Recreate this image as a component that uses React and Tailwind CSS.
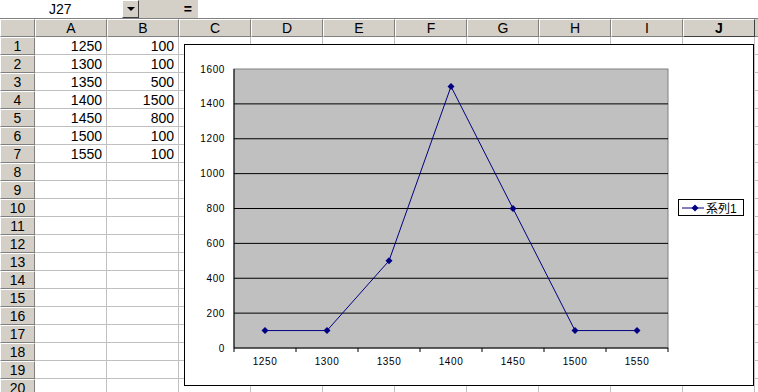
import React from "react";

const cols = ["A", "B", "C", "D", "E", "F", "G", "H", "I", "J"];
const data = [
  [1250, 100],
  [1300, 100],
  [1350, 500],
  [1400, 1500],
  [1450, 800],
  [1500, 100],
  [1550, 100],
];
const rows = Array.from({ length: 20 }, (_, i) => i + 1);

// plot area in chart-local coords
const PL = 49;
const PR = 483;
const PT = 24;
const PB = 303;
const catW = (PR - PL) / 7;
const yOf = (v) => PB - (v / 1600) * (PB - PT);
const xOf = (i) => PL + catW * i + catW / 2;

function Diamond({ x, y }) {
  return (
    <polygon
      points={`${x},${y - 3.5} ${x + 3.5},${y} ${x},${y + 3.5} ${x - 3.5},${y}`}
      fill="#000080"
    />
  );
}

function Chart() {
  const ticks = [0, 200, 400, 600, 800, 1000, 1200, 1400, 1600];
  const pts = data.map(([, v], i) => `${xOf(i)},${yOf(v)}`).join(" ");
  return (
    <div className="absolute left-[184px] top-[44px] w-[570px] h-[342px] bg-white border border-black">
      <svg width="568" height="340" className="block">
        <rect x={PL} y={PT} width={PR - PL} height={PB - PT} fill="#c0c0c0" stroke="#808080" />
        {ticks.slice(1, -1).map((t) => (
          <line key={t} x1={PL} x2={PR} y1={yOf(t)} y2={yOf(t)} stroke="#000" />
        ))}
        <line x1={PL} x2={PL} y1={PT} y2={PB} stroke="#000" />
        <line x1={PL} x2={PR} y1={PB} y2={PB} stroke="#000" />
        {Array.from({ length: 8 }, (_, k) => (
          <line key={k} x1={PL + catW * k} x2={PL + catW * k} y1={PB} y2={PB + 4} stroke="#000" />
        ))}
        {ticks.map((t) => (
          <text
            key={t}
            x={40}
            y={yOf(t) + 3.5}
            textAnchor="end"
            fontSize="10"
            letterSpacing="0.6"
            fontFamily="'Liberation Sans', Arial, sans-serif"
            fill="#000"
          >
            {t}
          </text>
        ))}
        {data.map(([c], i) => (
          <text
            key={c}
            x={xOf(i)}
            y={320}
            textAnchor="middle"
            fontSize="10"
            letterSpacing="0.6"
            fontFamily="'Liberation Sans', Arial, sans-serif"
            fill="#000"
          >
            {c}
          </text>
        ))}
        <polyline points={pts} fill="none" stroke="#000080" strokeWidth="1" />
        {data.map(([c, v], i) => (
          <Diamond key={c} x={xOf(i)} y={yOf(v)} />
        ))}
        {/* legend */}
        <rect x={493.5} y={154.5} width={65} height={16} fill="#fff" stroke="#000" />
        <line x1={497} x2={519} y1={163} y2={163} stroke="#000080" />
        <Diamond x={510} y={163} />
        <text
          x={521}
          y={167.5}
          fontSize="12"
          fontFamily="'Liberation Sans', 'Noto Sans CJK JP', sans-serif"
          fill="#000"
        >
          系列1
        </text>
      </svg>
    </div>
  );
}

export default function App() {
  return (
    <div
      className="relative w-[758px] h-[392px] overflow-hidden bg-white text-[14px] text-black"
      style={{ fontFamily: "'Liberation Sans', Arial, 'Noto Sans CJK JP', sans-serif" }}
    >
      {/* formula bar */}
      <div className="flex h-[19px] border-b border-[#808080]">
        <div className="w-[122px] h-[18px] bg-white flex items-center pl-[49px] leading-none">J27</div>
        <div className="w-[17px] h-[18px] bg-[#d4d0c8] border-t border-l border-white border-r border-b border-r-[#404040] border-b-[#404040] flex items-center justify-center">
          <div className="w-0 h-0 border-l-[4px] border-r-[4px] border-t-[4px] border-l-transparent border-r-transparent border-t-black" />
        </div>
        <div className="w-[59px] h-[18px] bg-[#d4d0c8] flex items-center justify-end pr-[6px] font-bold leading-none">
          =
        </div>
        <div className="flex-1 bg-white" />
      </div>

      {/* sheet grid */}
      <div className="grid grid-cols-[35px_repeat(10,72px)_1fr]">
        <div className="h-[18px] bg-[#d4d0c8] border-t border-l border-white border-r border-b border-r-[#808080] border-b-[#808080]" />
        {cols.map((c) => (
          <div
            key={c}
            className={
              c === "J"
                ? "h-[18px] bg-[#d4d0c8] border-t border-l border-white border-r border-b border-r-[#404040] border-b-[#404040] flex items-center justify-center font-bold leading-none"
                : "h-[18px] bg-[#d4d0c8] border-t border-l border-white border-r border-b border-r-[#808080] border-b-[#808080] flex items-center justify-center leading-none"
            }
          >
            {c}
          </div>
        ))}
        <div className="h-[18px] bg-[#d4d0c8] border-b border-[#808080]" />

        {rows.map((r) => (
          <React.Fragment key={r}>
            <div className="h-[18px] bg-[#d4d0c8] border-t border-l border-white border-r border-b border-r-[#808080] border-b-[#808080] flex items-center justify-center leading-none">
              {r}
            </div>
            {cols.map((c, ci) => (
              <div
                key={c}
                className="h-[18px] border-r border-b border-[#c0c0c0] flex items-center justify-end pr-[4px] leading-none"
              >
                {ci < 2 && data[r - 1] ? data[r - 1][ci] : ""}
              </div>
            ))}
            <div className="h-[18px] border-b border-[#c0c0c0]" />
          </React.Fragment>
        ))}
      </div>

      <Chart />
    </div>
  );
}
